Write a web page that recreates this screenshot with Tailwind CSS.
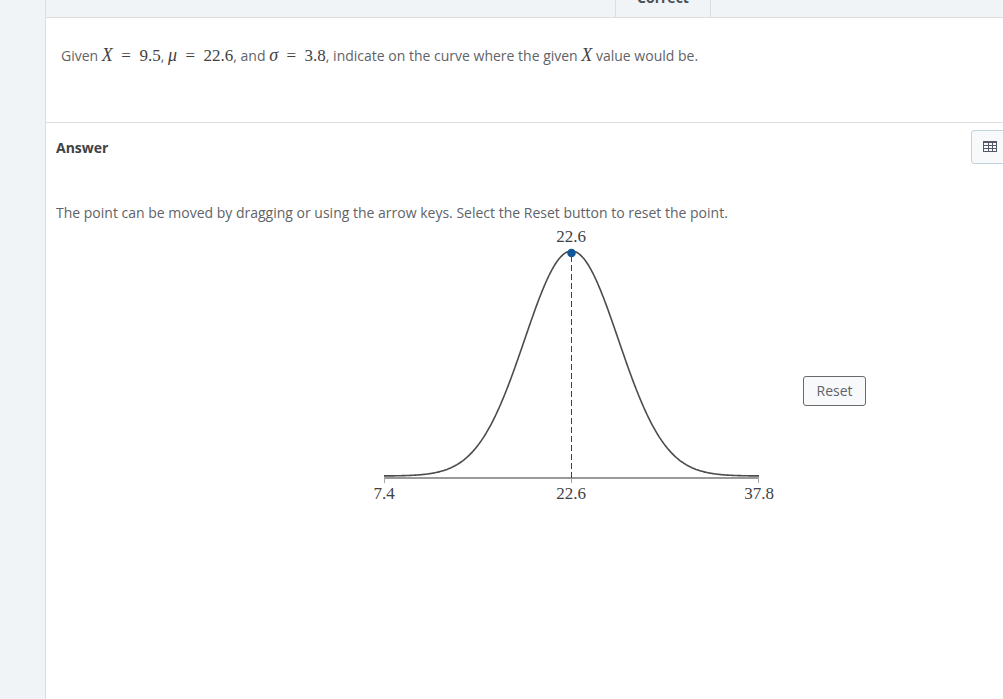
<!DOCTYPE html>
<html lang="en">
  <head>
    <meta charset="UTF-8" />
    <meta name="viewport" content="width=device-width, initial-scale=1.0" />
    <title>Normal Curve Question</title>
    <script src="https://cdn.jsdelivr.net/npm/@tailwindcss/browser@4"></script>
  </head>
  <body class="bg-[#f0f4f7] font-['Open_Sans',sans-serif] text-sm text-[#5f6368]">
    <div class="flex min-h-screen overflow-hidden pl-[45px]">
      <main class="min-w-0 flex-1 border-l border-[#dedede] bg-white">
        <!-- Status bar -->
        <header class="flex h-[18px] border-b border-[#dedede] bg-[#f0f4f7] pl-[569px]">
          <div class="flex w-24 items-end justify-center overflow-hidden border-x border-[#dedede] pb-[9px] font-bold text-[#4a5058]">
            Correct
          </div>
        </header>

        <!-- Question -->
        <section class="h-[105px] border-b border-[#dedede] px-[15px] pt-[25px]">
          <p class="leading-6 whitespace-nowrap">
            Given
            <span class="font-['Liberation_Serif',serif] text-[17px] text-[#424242]"><i class="text-[18px]">X</i>&ensp;=&ensp;9.5</span>,
            <span class="font-['Liberation_Serif',serif] text-[17px] text-[#424242]"><i class="text-[18px]">μ</i>&ensp;=&ensp;22.6</span>,
            and
            <span class="font-['Liberation_Serif',serif] text-[17px] text-[#424242]"><i class="text-[18px]">σ</i>&ensp;=&ensp;3.8</span>,
            indicate on the curve where the given
            <i class="font-['Liberation_Serif',serif] text-[18px] text-[#424242]">X</i>
            value would be.
          </p>
        </section>

        <!-- Answer -->
        <section class="pl-[10px]">
          <div class="flex items-start justify-between pt-[7px]">
            <h2 class="pt-2 font-bold text-[#424242]">Answer</h2>
            <button
              type="button"
              aria-label="Tables"
              class="-mr-2 flex h-[34px] w-10 items-center justify-center rounded-[3px] border border-[#c3d3de] bg-[#f7f9fb] pr-[2px] pb-[2px]"
            >
              <svg class="h-[11px] w-[14px]" viewBox="0 0 14 11" fill="none" stroke="#55586a" shape-rendering="crispEdges">
                <path d="M0 1H14" stroke-width="2" />
                <path d="M0.5 1V10.5H13.5V1M0 4.5H14M0 7.5H14M5.5 1V11M9.5 1V11" />
              </svg>
            </button>
          </div>

          <p class="mt-[39px] whitespace-nowrap">
            The point can be moved by dragging or using the arrow keys. Select
            the Reset button to reset the point.
          </p>

          <div class="flex items-center gap-[22px] pl-[305px]">
            <svg
              class="h-[336px] w-[420px] shrink-0 font-['Liberation_Serif',serif] text-[17px]"
              viewBox="0 0 420 336"
              role="img"
              aria-label="Normal curve from 7.4 to 37.8 with the point at 22.6"
            >
              <path d="M23 255H398" stroke="#9a9a9a" stroke-width="2" />
              <path d="M23.5 254V260M210.5 254V260M397.5 254V260" stroke="#a6a6a6" />
              <path d="M210.5 33V256" stroke="#424242" stroke-dasharray="6 3" />
              <path id="curve" fill="none" stroke="#4c4c4c" stroke-width="1.6" />
              <circle cx="210.5" cy="30" r="4.3" fill="#11589b" />
              <g fill="#424242" text-anchor="middle">
                <text x="210" y="19">22.6</text>
                <text x="23" y="276">7.4</text>
                <text x="210" y="276">22.6</text>
                <text x="398" y="276">37.8</text>
              </g>
            </svg>
            <button
              type="button"
              class="h-[30px] w-[63px] rounded-[3px] border border-[#6b6b6b] bg-[#f7f9fb]"
            >
              Reset
            </button>
          </div>
        </section>
      </main>
    </div>

    <script>
      // Bell curve over four standard deviations on each side of the mean
      const center = 210.5;
      const base = 253;
      const height = 225;
      const sigma = 187.5 / 4;

      const points = [];
      for (let x = 23; x <= 398; x += 1) {
        const z = (x - center) / sigma;
        const y = base - height * Math.exp((-z * z) / 2);
        points.push(`${x} ${y.toFixed(2)}`);
      }
      document
        .getElementById("curve")
        .setAttribute("d", "M" + points.join("L"));
    </script>
  </body>
</html>
